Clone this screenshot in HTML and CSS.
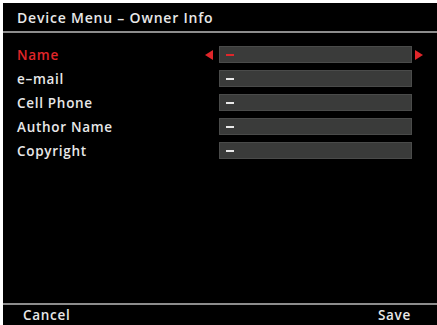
FILE: index.html
```html
<!DOCTYPE html>
<html lang="en">
<head>
    <meta charset="UTF-8">
    <meta name="viewport" content="width=device-width, initial-scale=1.0">
    <title>Device Menu - Owner Info</title>
    <link rel="stylesheet" href="styles.css">
</head>
<body>
    <div class="screen">
        <div class="title-bar">Device Menu &ndash; Owner Info</div>

        <div class="menu-list">
            <div class="menu-row active">
                <span class="row-label">Name</span>
                <span class="arrow-slot"><span class="arrow-left"></span></span>
                <span class="row-field"><span class="dash"></span></span>
                <span class="arrow-slot right"><span class="arrow-right"></span></span>
            </div>
            <div class="menu-row">
                <span class="row-label">e&ndash;mail</span>
                <span class="arrow-slot"></span>
                <span class="row-field"><span class="dash"></span></span>
                <span class="arrow-slot right"></span>
            </div>
            <div class="menu-row">
                <span class="row-label">Cell Phone</span>
                <span class="arrow-slot"></span>
                <span class="row-field"><span class="dash"></span></span>
                <span class="arrow-slot right"></span>
            </div>
            <div class="menu-row">
                <span class="row-label">Author Name</span>
                <span class="arrow-slot"></span>
                <span class="row-field"><span class="dash"></span></span>
                <span class="arrow-slot right"></span>
            </div>
            <div class="menu-row">
                <span class="row-label">Copyright</span>
                <span class="arrow-slot"></span>
                <span class="row-field"><span class="dash"></span></span>
                <span class="arrow-slot right"></span>
            </div>
        </div>

        <div class="bottom-bar">
            <span class="soft-key">Cancel</span>
            <span class="soft-key">Save</span>
        </div>
    </div>
</body>
</html>
```

FILE: styles.css
```css
        html, body {
            margin: 0;
            padding: 0;
            background: #ffffff;
        }

        .screen {
            margin: 3px 0 0 3px;
            width: 434px;
            height: 322px;
            background: #000000;
            display: flex;
            flex-direction: column;
            font-family: "Open Sans", "DejaVu Sans", sans-serif;
            font-weight: 600;
            color: #e8e8e8;
        }

        .title-bar {
            height: 28px;
            line-height: 30px;
            padding-left: 14px;
            font-size: 14px;
            letter-spacing: 0.8px;
            border-bottom: 2px solid #8c8c8c;
        }

        .menu-list {
            flex: 1;
            display: flex;
            flex-direction: column;
            gap: 7px;
            padding-top: 13px;
        }

        .menu-row {
            display: flex;
            align-items: center;
            height: 17px;
        }

        .row-label {
            width: 188px;
            padding-left: 14px;
            font-size: 13.5px;
            letter-spacing: 0.7px;
        }

        .menu-row.active .row-label {
            color: #e0262a;
        }

        .arrow-slot {
            width: 14px;
            height: 17px;
            display: flex;
            align-items: center;
        }

        .arrow-slot.right {
            padding-left: 3px;
        }

        .arrow-left {
            width: 0;
            height: 0;
            border-top: 5px solid transparent;
            border-bottom: 5px solid transparent;
            border-right: 8px solid #e0262a;
        }

        .arrow-right {
            width: 0;
            height: 0;
            border-top: 5px solid transparent;
            border-bottom: 5px solid transparent;
            border-left: 8px solid #e0262a;
        }

        .row-field {
            width: 185px;
            height: 15px;
            background: #3a3b3a;
            border: 1px solid #4a4b4a;
            display: flex;
            align-items: center;
            padding-left: 6px;
        }

        .dash {
            display: block;
            width: 8px;
            height: 2px;
            background: #e8e8e8;
        }

        .menu-row.active .dash {
            background: #e0262a;
        }

        .bottom-bar {
            height: 20px;
            border-top: 2px solid #8c8c8c;
            display: flex;
            justify-content: space-between;
            align-items: center;
            padding: 0 26px 0 20px;
            font-size: 13.5px;
            letter-spacing: 0.7px;
        }
```
